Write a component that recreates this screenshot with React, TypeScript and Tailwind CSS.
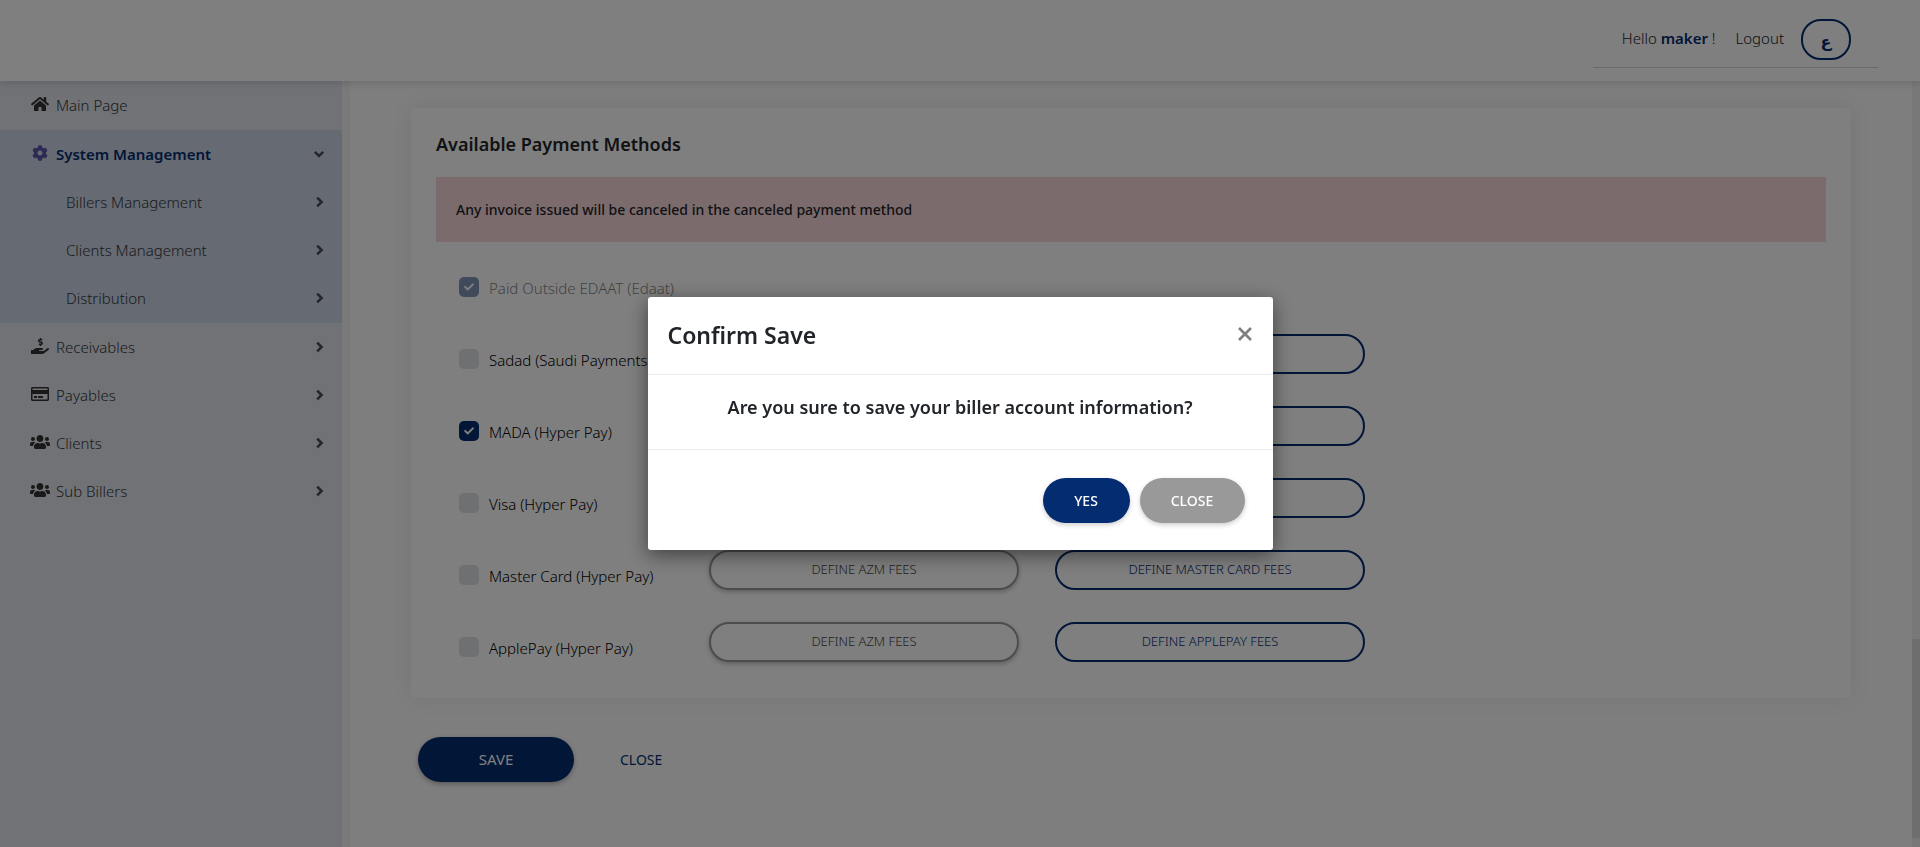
import React from "react";
import {
  FaHome,
  FaCog,
  FaCheck,
  FaHandHoldingUsd,
  FaUsers,
  FaRegCreditCard,
} from "react-icons/fa";

const subItems = ["Billers Management", "Clients Management", "Distribution"];

const bottomItems = [
  { label: "Receivables", Icon: FaHandHoldingUsd },
  { label: "Payables", Icon: FaRegCreditCard },
  { label: "Clients", Icon: FaUsers },
  { label: "Sub Billers", Icon: FaUsers },
];

type Method = {
  id: string;
  label: string;
  checked?: boolean;
  disabled?: boolean;
  buttons?: [string, string];
};

const methods: Method[] = [
  { id: "edaat", label: "Paid Outside EDAAT (Edaat)", checked: true, disabled: true },
  { id: "sadad", label: "Sadad (Saudi Payments)", buttons: ["", ""] },
  { id: "mada", label: "MADA (Hyper Pay)", checked: true, buttons: ["", ""] },
  { id: "visa", label: "Visa (Hyper Pay)", buttons: ["", ""] },
  { id: "master", label: "Master Card (Hyper Pay)", buttons: ["Define AZM Fees", "Define Master Card Fees"] },
  { id: "apple", label: "ApplePay (Hyper Pay)", buttons: ["Define AZM Fees", "Define ApplePay Fees"] },
];

function Chevron({ open = false }: { open?: boolean }) {
  return (
    <svg viewBox="0 0 12 12" className="h-3 w-3 text-[#4a4c52]">
      <path
        d={open ? "M1.8 3.8L6 8l4.2-4.2" : "M4.2 1.6L8.6 6l-4.4 4.4"}
        fill="none"
        stroke="currentColor"
        strokeWidth="2.5"
      />
    </svg>
  );
}

function Header() {
  return (
    <header className="relative z-10 flex h-[81px] shrink-0 justify-end bg-white pr-[42px] shadow-[0_2px_8px_rgba(0,0,0,0.15)]">
      <div className="flex h-[68px] items-center border-b border-[#d4d4d4] pt-3 pr-[27px] pl-[29px]">
        <span className="mb-[2px] text-[#222]">
          Hello <b className="font-semibold text-[#042c71]">maker</b> !
        </span>
        <a href="#logout" className="mb-[2px] ml-5 text-[#222]">
          Logout
        </a>
        <button
          type="button"
          className="ml-[17px] h-[41px] w-[50px] rounded-[20px] border-2 border-[#042c71] pt-1 font-['DejaVu_Sans',sans-serif] text-base leading-none font-bold text-[#042c71]"
        >
          ع
        </button>
      </div>
    </header>
  );
}

function Sidebar() {
  return (
    <nav className="w-[342px] shrink-0 bg-[#e3e5ec] text-[#33363c]">
      <a href="#main" className="mb-px flex h-12 items-center pl-[30px]">
        <FaHome className="mr-[6px] mb-[2px] h-4 w-5 text-[#333]" />
        Main Page
      </a>
      <div className="bg-[#ccd5e4] pb-px">
        <a
          href="#system"
          className="flex h-12 items-center pr-[17px] pl-[30px] font-semibold text-[#042c71]"
        >
          <FaCog className="mr-[6px] mb-[2px] h-4 w-5 text-[#5b56a8]" />
          <span className="flex-1">System Management</span>
          <Chevron open />
        </a>
        {subItems.map((label) => (
          <a key={label} href="#sub" className="flex h-12 items-center pr-[17px] pl-[66px]">
            <span className="flex-1">{label}</span>
            <Chevron />
          </a>
        ))}
      </div>
      {bottomItems.map(({ label, Icon }) => (
        <a key={label} href="#item" className="flex h-12 items-center pr-[17px] pl-[30px]">
          <Icon className="mr-[6px] mb-[2px] h-4 w-5 text-[#333]" />
          <span className="flex-1">{label}</span>
          <Chevron />
        </a>
      ))}
    </nav>
  );
}

function MethodRow({ method }: { method: Method }) {
  return (
    <div className="grid h-10 grid-cols-[237fr_310fr_310fr_425fr] items-center gap-x-9">
      <label
        htmlFor={method.id}
        className={`flex min-w-0 items-center pt-[10px] pl-[23px] whitespace-nowrap ${method.disabled ? "opacity-50" : ""}`}
      >
        <span className="mr-[10px] grid shrink-0 place-items-center">
          <input
            id={method.id}
            type="checkbox"
            defaultChecked={method.checked}
            disabled={method.disabled}
            className="col-start-1 row-start-1 h-5 w-5 appearance-none rounded-[5px] bg-[#dee0e3] checked:bg-[#042c71]"
          />
          {method.checked && (
            <FaCheck className="pointer-events-none col-start-1 row-start-1 h-[10px] w-[10px] text-white" />
          )}
        </span>
        <span className="pt-0.5 leading-5 text-black">{method.label}</span>
      </label>
      {method.buttons && (
        <>
          <button
            type="button"
            className="h-10 rounded-full border-2 border-[#999] bg-white text-[13px] text-[#444] uppercase shadow-[0_2px_5px_rgba(0,0,0,0.25)]"
          >
            {method.buttons[0]}
          </button>
          <button
            type="button"
            className="h-10 rounded-full border-2 border-[#042c71] bg-white text-[13px] text-[#042c71] uppercase"
          >
            {method.buttons[1]}
          </button>
        </>
      )}
    </div>
  );
}

function Dialog() {
  return (
    <div className="fixed inset-0 z-20 bg-black/50">
      <section
        role="dialog"
        aria-labelledby="dialog-title"
        className="mx-auto mt-[297px] w-full max-w-[625px] rounded-[3px] bg-white text-[#212529] shadow-[0_5px_20px_rgba(0,0,0,0.5)]"
      >
        <div className="flex h-[78px] items-center justify-between border-b border-[#e9ecef] pr-[21px] pl-5">
          <h2 id="dialog-title" className="text-[23px] font-semibold">
            Confirm Save
          </h2>
          <button type="button" aria-label="Close dialog" className="mb-1 text-[#808080]">
            <svg viewBox="0 0 14 14" className="h-[14px] w-[14px]">
              <path d="M1 1l12 12M13 1L1 13" stroke="currentColor" strokeWidth="2.7" />
            </svg>
          </button>
        </div>
        <p className="h-[75px] border-b border-[#e9ecef] pt-5 text-center text-lg leading-6 font-semibold">
          Are you sure to save your biller account information?
        </p>
        <div className="flex justify-end gap-[10px] pt-7 pr-7 pb-[27px] text-sm font-medium text-white">
          <button
            type="button"
            className="h-[45px] w-[87px] rounded-full bg-[#042c71] shadow-[0_2px_5px_rgba(0,0,0,0.2)]"
          >
            YES
          </button>
          <button
            type="button"
            className="h-[45px] w-[105px] rounded-full bg-[#999] shadow-[0_2px_5px_rgba(0,0,0,0.2)]"
          >
            CLOSE
          </button>
        </div>
      </section>
    </div>
  );
}

export default function App() {
  return (
    <div className="flex h-screen flex-col overflow-hidden bg-[#fcfcfc] font-['Noto_Sans',sans-serif] text-[15px] font-light">
      <Header />
      <div className="flex min-h-0 flex-1">
        <Sidebar />
        <div className="w-2 shrink-0 bg-[#f3f3f3]" />
        <main className="min-w-0 flex-1 px-[61px] pt-[27px]">
          <section className="rounded-[5px] bg-white px-[25px] pb-9 shadow-[0_0_20px_rgba(60,80,120,0.1)]">
            <h1 className="pt-6 pb-[21px] text-lg leading-6 font-semibold text-[#212529]">
              Available Payment Methods
            </h1>
            <div className="mb-5 flex h-[65px] items-center bg-[#f8d7da] px-5 text-sm font-medium text-[#212529]">
              Any invoice issued will be canceled in the canceled payment method
            </div>
            <div className="flex flex-col gap-8">
              {methods.map((method) => (
                <MethodRow key={method.id} method={method} />
              ))}
            </div>
          </section>
          <div className="flex items-center gap-[46px] pt-[39px] pl-[7px]">
            <button
              type="button"
              className="h-[45px] w-[156px] rounded-full bg-[#042c71] font-normal text-white shadow-[0_2px_5px_rgba(0,0,0,0.3)]"
            >
              SAVE
            </button>
            <button type="button" className="text-sm font-normal text-[#042c71]">
              CLOSE
            </button>
          </div>
        </main>
        <div className="flex w-2 shrink-0 flex-col justify-end bg-[#f1f1f1] pb-[9px]">
          <div className="h-[199px] bg-[#dcdcdc]" />
        </div>
      </div>
      <Dialog />
    </div>
  );
}
